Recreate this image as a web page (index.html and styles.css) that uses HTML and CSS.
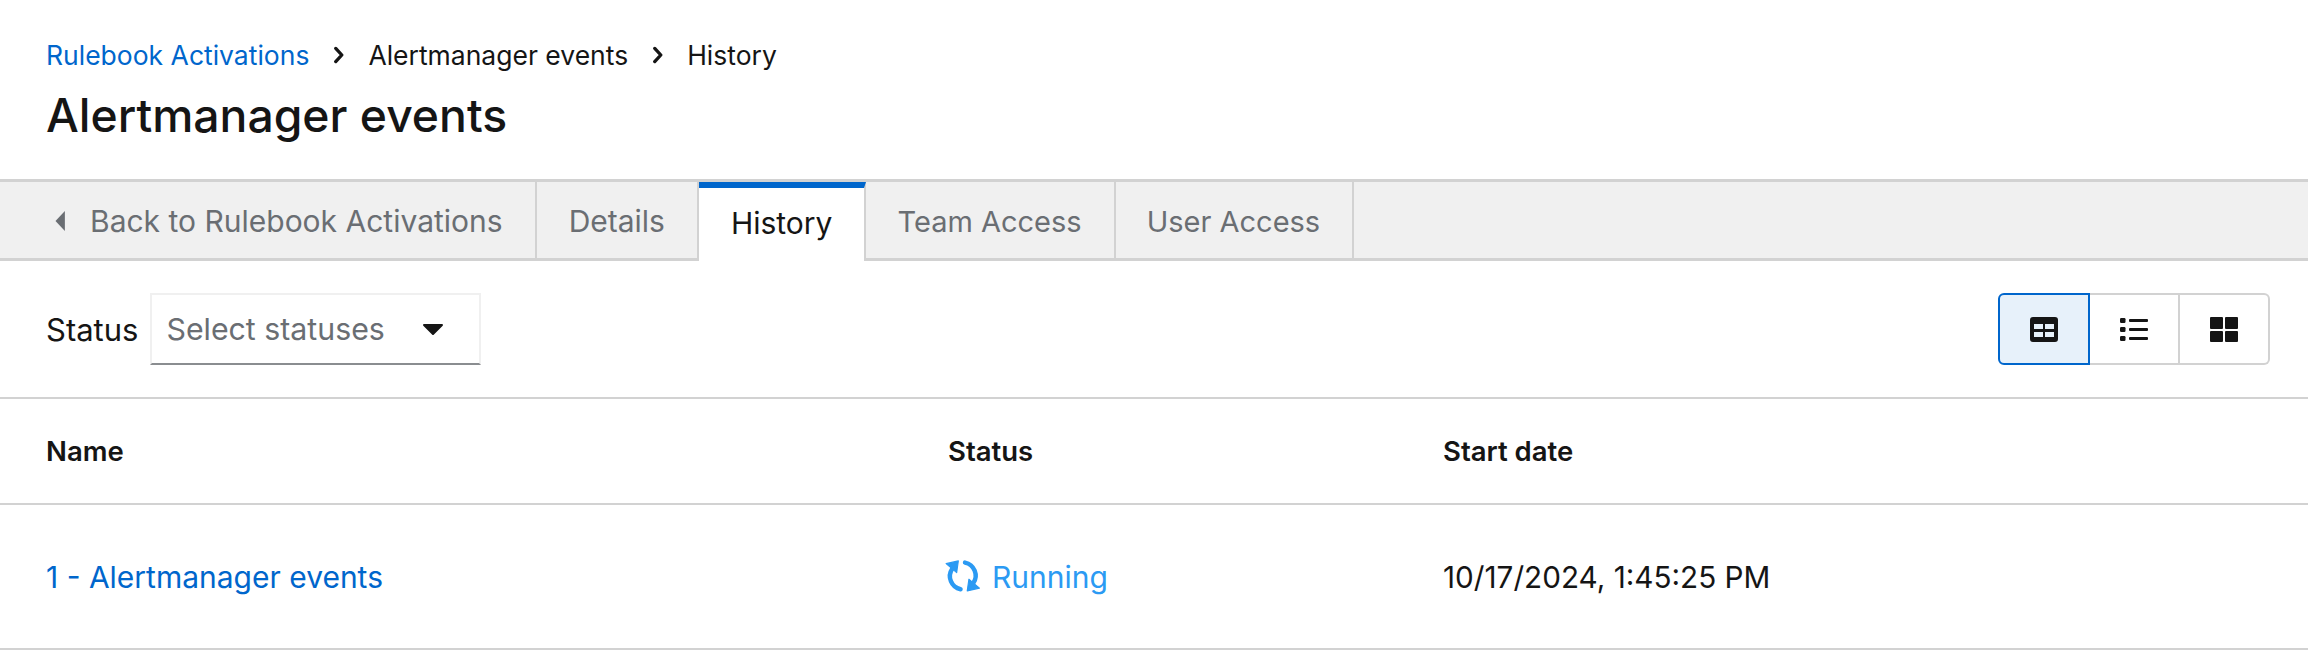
FILE: index.html
```html
<!DOCTYPE html>
<html lang="en">
<head>
    <meta charset="UTF-8">
    <title>Alertmanager events</title>
    <link rel="stylesheet" href="styles.css">
</head>
<body>
    <header class="page-head">
        <nav class="crumbs">
            <a href="#">Rulebook Activations</a>
            <svg class="chev" viewBox="0 0 10 16"><path d="M2.500 2 8 8l-5.500 6" fill="none" stroke="currentColor" stroke-width="3" stroke-linecap="round" stroke-linejoin="round"/></svg>
            <span>Alertmanager events</span>
            <svg class="chev" viewBox="0 0 10 16"><path d="M2.500 2 8 8l-5.500 6" fill="none" stroke="currentColor" stroke-width="3" stroke-linecap="round" stroke-linejoin="round"/></svg>
            <span>History</span>
        </nav>
        <h1>Alertmanager events</h1>
    </header>

    <div class="tabs">
        <a class="tab tab-back" href="#">
            <svg class="back-caret" viewBox="0 0 8 16"><path d="M7.500 0v16L0 8z" fill="currentColor"/></svg>
            Back to Rulebook Activations
        </a>
        <a class="tab" href="#">Details</a>
        <a class="tab active" href="#">History</a>
        <a class="tab tab-access" href="#">Team Access</a>
        <a class="tab tab-access" href="#">User Access</a>
    </div>

    <div class="toolbar">
        <label class="filter-label">Status</label>
        <div class="select">
            <span>Select statuses</span>
            <svg class="select-caret" viewBox="0 0 20 12"><path d="M1 1h18a1 1 0 0 1 .7 1.700l-9 9a1 1 0 0 1-1.400 0l-9-9A1 1 0 0 1 1 1z" fill="currentColor"/></svg>
        </div>
        <div class="view-toggle">
            <button class="view-btn selected">
                <svg viewBox="0 0 28 25"><path fill-rule="evenodd" d="M3 0h22a3 3 0 0 1 3 3v19a3 3 0 0 1-3 3H3a3 3 0 0 1-3-3V3a3 3 0 0 1 3-3zm1 7v5h9V7zm11 0v5h9V7zM4 15v5h9v-5zm11 0v5h9v-5z" fill="#151515"/></svg>
            </button>
            <button class="view-btn">
                <svg viewBox="0 0 28 25" fill="#151515"><rect y="1" width="5.500" height="5" rx="1.200"/><rect y="10" width="5.500" height="5" rx="1.200"/><rect y="19" width="5.500" height="5" rx="1.200"/><rect x="9" y="2" width="19" height="3" rx="1"/><rect x="9" y="11" width="19" height="3" rx="1"/><rect x="9" y="20" width="19" height="3" rx="1"/></svg>
            </button>
            <button class="view-btn">
                <svg viewBox="0 0 28 25" fill="#151515"><rect width="13" height="12" rx="1"/><rect x="15" width="13" height="12" rx="1"/><rect y="14" width="13" height="11" rx="1"/><rect x="15" y="14" width="13" height="11" rx="1"/></svg>
            </button>
        </div>
    </div>

    <table class="history">
        <thead>
            <tr>
                <th class="col-name">Name</th>
                <th class="col-status">Status</th>
                <th>Start date</th>
            </tr>
        </thead>
        <tbody>
            <tr>
                <td><a href="#">1 - Alertmanager events</a></td>
                <td>
                    <span class="running">
                        <svg class="spin" viewBox="5 2 36 36">
                            <path d="M19 31A12 12 0 0 1 11.500 12.500M23 7A12 12 0 0 1 30.500 25.500" fill="none" stroke="currentColor" stroke-width="4" stroke-linecap="round"/>
                            <path d="M6 8 15.500 16 17 5.500zM36 30 26.500 22 25 32.500z" fill="currentColor" stroke="currentColor" stroke-linejoin="round"/>
                        </svg>
                        <span>Running</span>
                    </span>
                </td>
                <td class="cell-date">10/17/2024, 1:45:25 PM</td>
            </tr>
        </tbody>
    </table>
</body>
</html>
```

FILE: styles.css
```css
* {
    box-sizing: border-box;
}
body {
    margin: 0;
    background: #fff;
    color: #151515;
    font-family: Inter, "Open Sans", sans-serif;
    font-size: 30px;
}
a {
    color: #0066cc;
    text-decoration: none;
}
.page-head {
    height: 179px;
    padding: 36px 46px 0;
}
.crumbs {
    display: flex;
    align-items: center;
    gap: 23px;
    height: 38px;
    font-size: 26.5px;
}
.chev {
    width: 11px;
    height: 18px;
    margin: 0 1px;
}
h1 {
    margin: 11px 0 0;
    font-size: 46.3px;
    font-weight: 500;
    line-height: 60px;
}
.tabs {
    display: flex;
    height: 82px;
    background: #f0f0f0;
    border-top: 3px solid #d2d2d2;
    border-bottom: 3px solid #d2d2d2;
}
.tab {
    display: flex;
    align-items: center;
    gap: 24px;
    padding: 2px 32px 0;
    color: #6a6e73;
    border-right: 2px solid #d2d2d2;
}
.tab-access {
    padding-left: 31px;
    font-size: 29px;
}
.tab-back {
    padding-left: 55px;
}
.back-caret {
    width: 11px;
    height: 20px;
}
.active {
    margin-bottom: -3px;
    padding-top: 0;
    padding-bottom: 3px;
    background: #fff;
    color: #151515;
    border-top: 6px solid #0066cc;
}
.toolbar {
    display: flex;
    align-items: center;
    height: 138px;
    padding: 0 38px 0 46px;
    border-bottom: 2px solid #d2d2d2;
}
.filter-label {
    margin-right: 12px;
    font-size: 31px;
}
.select {
    display: flex;
    align-items: center;
    justify-content: space-between;
    width: 331px;
    height: 72px;
    padding: 0 36px 0 14px;
    color: #6a6e73;
    font-size: 30.3px;
    border: 2px solid #f0f0f0;
    border-bottom: 2px solid #8a8d90;
}
.select-caret {
    width: 20px;
    height: 12px;
    color: #151515;
}
.view-toggle {
    display: flex;
    margin-left: auto;
}
.view-btn {
    display: flex;
    align-items: center;
    justify-content: center;
    width: 90px;
    height: 72px;
    background: #fff;
    border: 2px solid #d2d2d2;
    border-left: 0;
}
.view-btn svg {
    width: 28px;
    height: 25px;
}
.view-btn:last-child {
    border-radius: 0 6px 6px 0;
}
.view-btn.selected {
    width: 92px;
    background: #e7f1fa;
    border: 2px solid #0066cc;
    border-radius: 6px 0 0 6px;
}
.history {
    width: 100%;
    border-collapse: collapse;
}
.history th,
.history td {
    padding: 0;
    text-align: left;
    border-bottom: 2px solid #d2d2d2;
}
.history th {
    height: 105px;
    font-size: 27.5px;
    font-weight: 600;
}
.history td {
    height: 145px;
}
.history td.cell-date {
    font-size: 29.7px;
}
.history th:first-child,
.history td:first-child {
    padding-left: 46px;
}
.col-name {
    width: 948px;
}
.col-status {
    width: 495px;
}
.running {
    display: flex;
    align-items: center;
    gap: 7px;
    margin-left: -3px;
    color: #2b9af3;
}
.spin {
    width: 40px;
    height: 40px;
}
```
